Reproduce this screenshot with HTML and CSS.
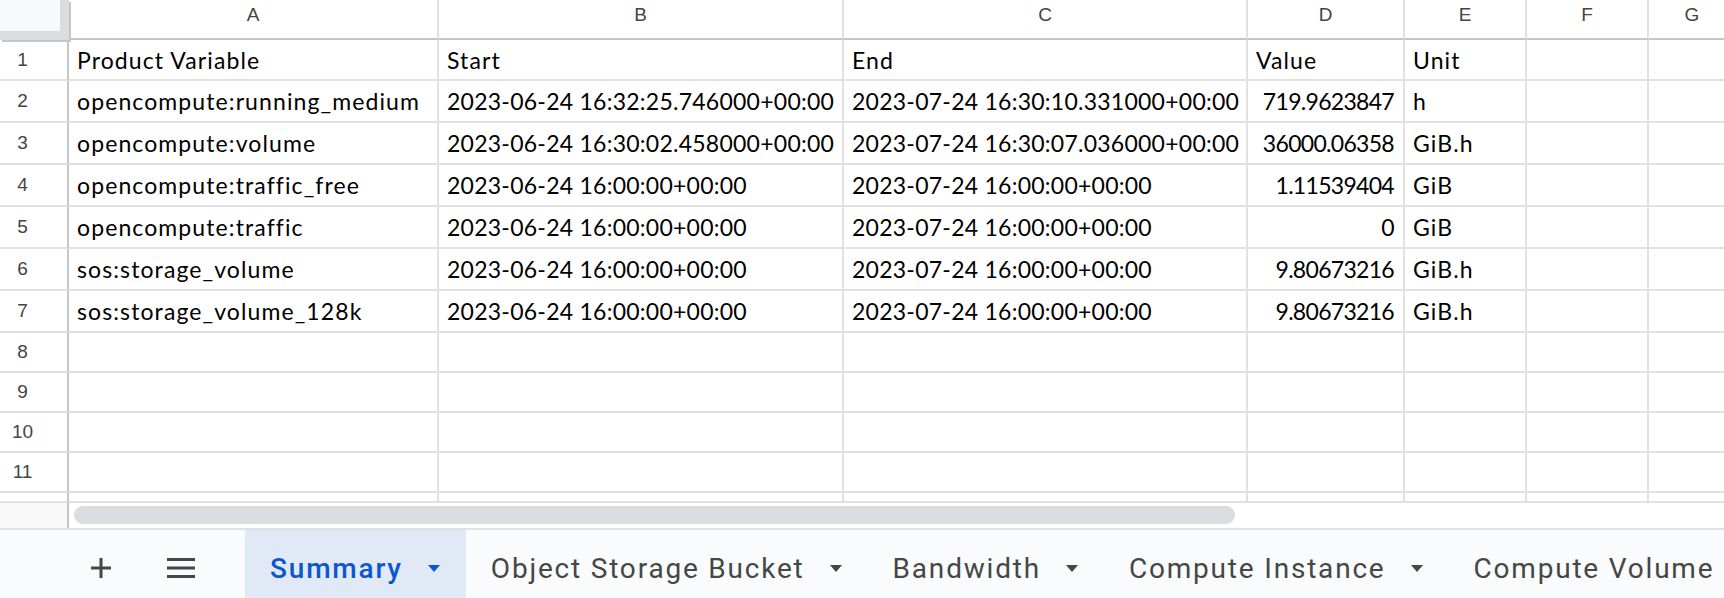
FILE: index.html
```html
<!DOCTYPE html>
<html lang="en">
<head>
    <meta charset="UTF-8">
    <meta name="viewport" content="width=device-width, initial-scale=1.0">
    <title>Usage Summary</title>
    <link rel="stylesheet" href="styles.css">
</head>
<body>
    <div class="sheet">
        <div class="grid">
            <div class="corner"></div>
            <div class="colhead">A</div>
            <div class="colhead">B</div>
            <div class="colhead">C</div>
            <div class="colhead">D</div>
            <div class="colhead">E</div>
            <div class="colhead">F</div>
            <div class="colhead">G</div>

            <div class="rowhead">1</div>
            <div class="cell">Product Variable</div>
            <div class="cell">Start</div>
            <div class="cell">End</div>
            <div class="cell">Value</div>
            <div class="cell">Unit</div>
            <div class="cell"></div>
            <div class="cell"></div>

            <div class="rowhead">2</div>
            <div class="cell">opencompute:running_medium</div>
            <div class="cell date">2023-06-24 16:32:25.746000+00:00</div>
            <div class="cell date">2023-07-24 16:30:10.331000+00:00</div>
            <div class="cell num">719.9623847</div>
            <div class="cell">h</div>
            <div class="cell"></div>
            <div class="cell"></div>

            <div class="rowhead">3</div>
            <div class="cell">opencompute:volume</div>
            <div class="cell date">2023-06-24 16:30:02.458000+00:00</div>
            <div class="cell date">2023-07-24 16:30:07.036000+00:00</div>
            <div class="cell num">36000.06358</div>
            <div class="cell">GiB.h</div>
            <div class="cell"></div>
            <div class="cell"></div>

            <div class="rowhead">4</div>
            <div class="cell">opencompute:traffic_free</div>
            <div class="cell date">2023-06-24 16:00:00+00:00</div>
            <div class="cell date">2023-07-24 16:00:00+00:00</div>
            <div class="cell num">1.11539404</div>
            <div class="cell">GiB</div>
            <div class="cell"></div>
            <div class="cell"></div>

            <div class="rowhead">5</div>
            <div class="cell">opencompute:traffic</div>
            <div class="cell date">2023-06-24 16:00:00+00:00</div>
            <div class="cell date">2023-07-24 16:00:00+00:00</div>
            <div class="cell num">0</div>
            <div class="cell">GiB</div>
            <div class="cell"></div>
            <div class="cell"></div>

            <div class="rowhead">6</div>
            <div class="cell">sos:storage_volume</div>
            <div class="cell date">2023-06-24 16:00:00+00:00</div>
            <div class="cell date">2023-07-24 16:00:00+00:00</div>
            <div class="cell num">9.80673216</div>
            <div class="cell">GiB.h</div>
            <div class="cell"></div>
            <div class="cell"></div>

            <div class="rowhead">7</div>
            <div class="cell">sos:storage_volume_128k</div>
            <div class="cell date">2023-06-24 16:00:00+00:00</div>
            <div class="cell date">2023-07-24 16:00:00+00:00</div>
            <div class="cell num">9.80673216</div>
            <div class="cell">GiB.h</div>
            <div class="cell"></div>
            <div class="cell"></div>

            <div class="rowhead">8</div>
            <div class="cell"></div><div class="cell"></div><div class="cell"></div>
            <div class="cell"></div><div class="cell"></div><div class="cell"></div>
            <div class="cell"></div>

            <div class="rowhead">9</div>
            <div class="cell"></div><div class="cell"></div><div class="cell"></div>
            <div class="cell"></div><div class="cell"></div><div class="cell"></div>
            <div class="cell"></div>

            <div class="rowhead">10</div>
            <div class="cell"></div><div class="cell"></div><div class="cell"></div>
            <div class="cell"></div><div class="cell"></div><div class="cell"></div>
            <div class="cell"></div>

            <div class="rowhead">11</div>
            <div class="cell"></div><div class="cell"></div><div class="cell"></div>
            <div class="cell"></div><div class="cell"></div><div class="cell"></div>
            <div class="cell"></div>

            <!-- row 12 is only partly in view -->
            <div class="rowhead"></div>
            <div class="cell"></div><div class="cell"></div><div class="cell"></div>
            <div class="cell"></div><div class="cell"></div><div class="cell"></div>
            <div class="cell"></div>
        </div>

        <!-- Horizontal scrollbar -->
        <div class="hscroll">
            <div class="hscroll-gutter"></div>
            <div class="hscroll-track">
                <div class="hscroll-thumb"></div>
            </div>
        </div>
    </div>

    <!-- Sheet tabs -->
    <div class="tabbar">
        <button class="tool" title="Add sheet">
            <svg width="22" height="22" viewBox="0 0 22 22"><path d="M11 1v20M1 11h20" stroke="#444746" stroke-width="3"/></svg>
        </button>
        <button class="tool" title="All sheets">
            <svg width="28" height="22" viewBox="0 0 28 22"><path d="M0 2.5h28M0 11h28M0 19.5h28" stroke="#444746" stroke-width="3"/></svg>
        </button>
        <div class="tab active"><span class="tab-label">Summary</span><span class="caret"></span></div>
        <div class="tab"><span class="tab-label">Object Storage Bucket</span><span class="caret"></span></div>
        <div class="tab"><span class="tab-label">Bandwidth</span><span class="caret"></span></div>
        <div class="tab"><span class="tab-label">Compute Instance</span><span class="caret"></span></div>
        <div class="tab"><span class="tab-label">Compute Volume</span><span class="caret"></span></div>
    </div>
</body>
</html>
```

FILE: styles.css
```css
/* General */
* {
    margin: 0;
    padding: 0;
    box-sizing: border-box;
}

body {
    width: 1724px;
    height: 598px;
    overflow: hidden;
    background-color: #fff;
    font-family: 'Lato', 'Liberation Sans', sans-serif;
}

/* Grid */
.sheet {
    width: 1724px;
    overflow: hidden;
}

.grid {
    display: grid;
    grid-template-columns: 69px 370px 405px 404px 157px 122px 122px 88px;
    grid-template-rows: 40px 41px repeat(6, 42px) repeat(4, 40px) 10px;
    width: 1737px;
}

.corner {
    background-color: #f8f9fa;
    border-right: 9px solid #dadce0;
    border-bottom: 9px solid #dadce0;
    box-shadow: 2px 2px 0 #c4c7c5;
}

.colhead {
    display: flex;
    justify-content: center;
    align-items: center;
    padding-bottom: 9px;
    font-family: 'Liberation Sans', Arial, sans-serif;
    font-size: 19px;
    color: #444;
    border-right: 2px solid #e1e1e1;
    border-bottom: 2px solid #c4c7c5;
}

.rowhead {
    display: flex;
    justify-content: center;
    align-items: center;
    padding-right: 22px;
    font-family: 'Liberation Sans', Arial, sans-serif;
    font-size: 19px;
    color: #444;
    border-right: 2px solid #c4c7c5;
    border-bottom: 2px solid #e1e1e1;
}

.cell {
    display: flex;
    align-items: center;
    padding: 0 8px;
    font-size: 23px;
    letter-spacing: 1.1px;
    color: #000;
    white-space: nowrap;
    overflow: hidden;
    border-right: 2px solid #e1e1e1;
    border-bottom: 2px solid #e1e1e1;
}

.cell.date {
    letter-spacing: 0.25px;
}

.cell.num {
    justify-content: flex-end;
    padding: 0 9px 0 4px;
    letter-spacing: -0.7px;
}

/* Horizontal scrollbar */
.hscroll {
    display: flex;
    height: 27px;
    border-bottom: 2px solid #e1e1e1;
}

.hscroll-gutter {
    width: 69px;
    background-color: #f8f8f8;
    border-right: 2px solid #c4c7c5;
}

.hscroll-track {
    flex: 1;
    padding: 3px 0 0 5px;
}

.hscroll-thumb {
    width: 1161px;
    height: 18px;
    border-radius: 9px;
    background-color: #dadce0;
}

/* Sheet tabs */
.tabbar {
    display: flex;
    align-items: stretch;
    height: 68px;
    padding-left: 73px;
    background-color: #f9fbfd;
    font-family: 'Roboto', 'Liberation Sans', sans-serif;
    white-space: nowrap;
    overflow: hidden;
}

.tool {
    display: flex;
    flex-shrink: 0;
    align-items: center;
    justify-content: center;
    width: 56px;
    margin-right: 24px;
    padding-top: 8px;
    border: none;
    background: none;
}

.tool + .tool {
    margin-right: 36px;
}

.tab {
    display: flex;
    flex-shrink: 0;
    align-items: center;
    padding: 8px 26px 0 25px;
    font-size: 28px;
    letter-spacing: 1.8px;
    color: #444746;
}

.tab.active {
    background-color: #e1e9f7;
    color: #0b57d0;
    font-weight: 500;
}

.caret {
    width: 0;
    height: 0;
    margin-left: 25px;
    border-left: 6px solid transparent;
    border-right: 6px solid transparent;
    border-top: 7px solid #444746;
}

.tab.active .caret {
    border-top-color: #0b57d0;
}
```
